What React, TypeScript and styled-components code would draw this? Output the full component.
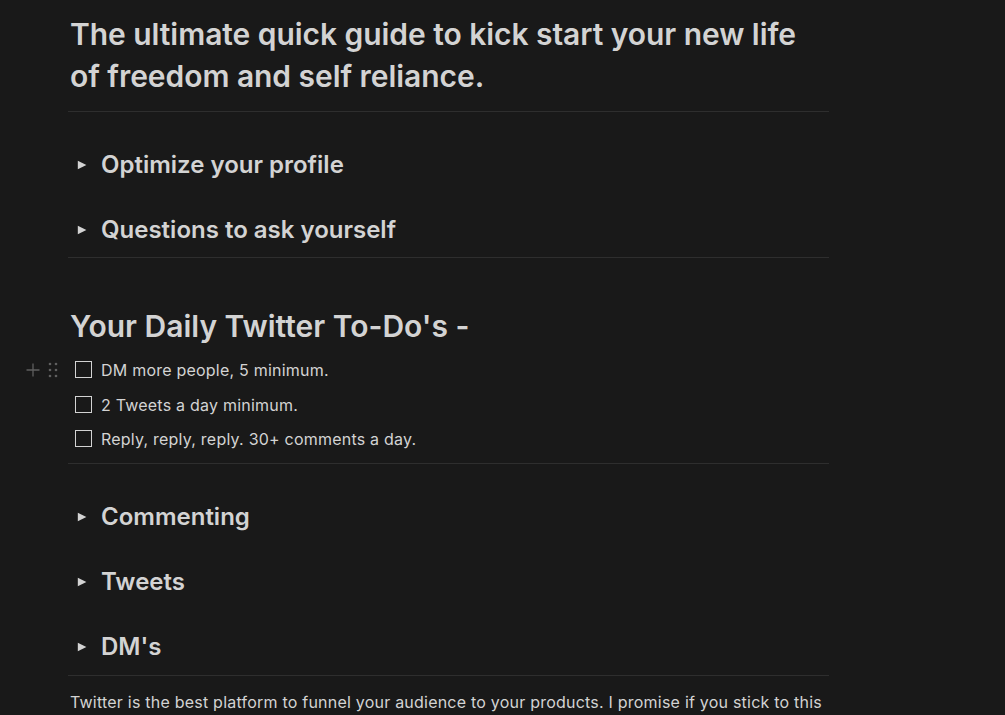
import { createGlobalStyle } from 'styled-components'
import styled from 'styled-components'

const GlobalStyle = createGlobalStyle`
  html, body {
    margin: 0;
    padding: 0;
    background: #191919;
  }
  body {
    font-family: Inter, "Noto Sans", "Liberation Sans", sans-serif;
    color: #d3d3d3;
    -webkit-font-smoothing: antialiased;
  }
`

const todos = [
  'DM more people, 5 minimum.',
  '2 Tweets a day minimum.',
  'Reply, reply, reply. 30+ comments a day.'
]

const Triangle = () => (
  <svg width='12' height='12' viewBox='0 0 12 12'>
    <path d='M1.8 1.7 L10.4 6 L1.8 10.3 Z' fill='#d3d3d3' />
  </svg>
)

const Toggle = ({ title, first }: { title: string; first?: boolean }) => (
  <ToggleRow first={first}>
    <Arrow>
      <Triangle />
    </Arrow>
    <ToggleTitle>{title}</ToggleTitle>
  </ToggleRow>
)

const Todo = ({ text, hovered }: { text: string; hovered?: boolean }) => (
  <TodoRow>
    {hovered && (
      <Handles>
        <svg width='14' height='14' viewBox='0 0 14 14'>
          <path d='M7 0.5 V13.5 M0.5 7 H13.5' stroke='#5f5f5f' strokeWidth='1.3' />
        </svg>
        <svg width='10' height='16' viewBox='0 0 10 16'>
          {[2, 8].map(x =>
            [2, 8, 14].map(y => <circle key={`${x}-${y}`} cx={x} cy={y} r='1.3' fill='#5f5f5f' />)
          )}
        </svg>
      </Handles>
    )}
    <Box />
    <TodoText>{text}</TodoText>
  </TodoRow>
)

export default function App() {
  return (
    <>
      <GlobalStyle />
      <Page>
        <Column>
          <Title>The ultimate quick guide to kick start your new life of freedom and self reliance.</Title>
          <Divider gap={14} />

          <Toggle title='Optimize your profile' first />
          <Toggle title='Questions to ask yourself' />
          <Divider gap={12} />

          <Heading>Your Daily Twitter To-Do's -</Heading>
          <TodoList>
            {todos.map((t, i) => (
              <Todo key={t} text={t} hovered={i === 0} />
            ))}
          </TodoList>
          <Divider gap={12} />

          <Toggle title='Commenting' first />
          <Toggle title='Tweets' />
          <Toggle title="DM's" />
          <Divider />

          <Paragraph>
            Twitter is the best platform to funnel your audience to your products. I promise if you stick to this
          </Paragraph>
        </Column>
      </Page>
    </>
  )
}

const Page = styled.div`
  height: 715px;
  overflow: hidden;
  padding-top: 13px;
  box-sizing: border-box;
`

const Column = styled.div`
  margin-left: 68px;
  width: 761px;
`

const Title = styled.h1`
  margin: 0;
  padding: 0 2px;
  font-size: 30px;
  line-height: 42px;
  font-weight: 600;
  letter-spacing: -0.05px;
  width: 740px;
`

const Divider = styled.div<{ gap?: number }>`
  height: 1px;
  background: #2e2e2e;
  margin-top: ${p => p.gap ?? 13}px;
`

const ToggleRow = styled.div<{ first?: boolean }>`
  display: flex;
  align-items: center;
  margin-top: ${p => (p.first ? 37 : 34)}px;
  height: 31px;
`

const Arrow = styled.span`
  display: flex;
  align-items: center;
  justify-content: center;
  width: 24px;
  margin-left: 2px;
  margin-right: 7px;
`

const ToggleTitle = styled.div`
  font-size: 24px;
  line-height: 31px;
  font-weight: 600;
`

const Heading = styled.h2`
  margin: 49px 0 0;
  padding: 0 2px;
  font-size: 30px;
  line-height: 39px;
  font-weight: 600;
`

const TodoList = styled.div`
  margin-top: 12px;
  display: flex;
  flex-direction: column;
  gap: 10.5px;
`

const TodoRow = styled.div`
  position: relative;
  display: flex;
  align-items: center;
  height: 24px;
  padding-left: 7px;
`

const Handles = styled.div`
  position: absolute;
  left: -42px;
  top: 4px;
  display: flex;
  align-items: center;
  gap: 8px;
`

const Box = styled.span`
  width: 15px;
  height: 15px;
  border: 1.5px solid #d3d3d3;
  margin-right: 9px;
  margin-top: -1px;
  flex: none;
`

const TodoText = styled.span`
  font-size: 16px;
  line-height: 24px;
  letter-spacing: 0.22px;
`

const Paragraph = styled.p`
  margin: 14px 0 0;
  padding: 0 2px;
  font-size: 16px;
  line-height: 24px;
  letter-spacing: 0.22px;
  white-space: nowrap;
`
